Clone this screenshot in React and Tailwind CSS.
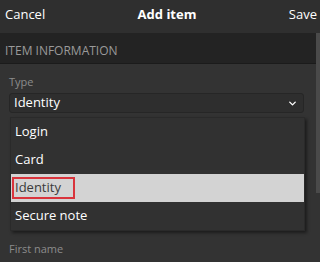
import { ChevronDown } from 'lucide-react';

const options = ['Login', 'Card', 'Identity', 'Secure note'];

export default function App() {
  const selected = 'Identity';

  return (
    <div
      className="relative w-[320px] h-[262px] overflow-hidden bg-[#333333] flex flex-col"
      style={{ fontFamily: '"Open Sans", "Noto Sans", sans-serif' }}
    >
      {/* header */}
      <div className="h-[33px] shrink-0 bg-[#2f2f2f] flex items-center justify-between pl-[5px] pr-[3px] pb-[3px] text-[13px] text-white">
        <span>Cancel</span>
        <span className="font-bold">Add item</span>
        <span>Save</span>
      </div>

      {/* section title */}
      <div className="h-[31px] shrink-0 bg-[#232323] border-b border-[#1b1b1b] flex items-center pt-[5px] px-[5px] text-[12px] text-[#9a9a9a]">
        ITEM INFORMATION
      </div>

      {/* body */}
      <main className="flex-1 px-[9px] pt-[10px] pr-[16px]">
        <div className="text-[11px] leading-[16px] text-[#8c8c8c]">Type</div>
        <div className="mt-[3px] h-[20px] rounded-[3px] border border-[#262626] bg-[#2e2e2e] flex items-center justify-between pl-[4px] pr-[5px]">
          <span className="text-[13px] text-white">{selected}</span>
          <ChevronDown className="w-[11px] h-[11px] text-white" strokeWidth={3} />
        </div>
        <div className="mt-[128px] text-[11px] text-[#8c8c8c]">First name</div>
      </main>

      {/* scrollbar */}
      <div className="absolute right-0 top-[33px] w-[4px] h-[160px] bg-[#4a4a4a]" />

      {/* open dropdown */}
      <div className="absolute left-[10px] top-[117px] w-[295px] bg-[#313131] border border-[#2a2a2a] shadow-[2px_2px_3px_rgba(0,0,0,0.45)]">
        {options.map((opt) => (
          <div
            key={opt}
            className={
              opt === selected
                ? 'h-[28px] flex items-center bg-[#d3d3d3] text-[#3a3a3a] text-[13px]'
                : 'h-[28px] flex items-center pl-[4px] text-white text-[13px]'
            }
          >
            {opt === selected ? (
              <span className="ml-[1px] h-[22px] w-[63px] border-2 border-[#d9343c] flex items-center pl-[1px]">
                {opt}
              </span>
            ) : (
              opt
            )}
          </div>
        ))}
      </div>
    </div>
  );
}
